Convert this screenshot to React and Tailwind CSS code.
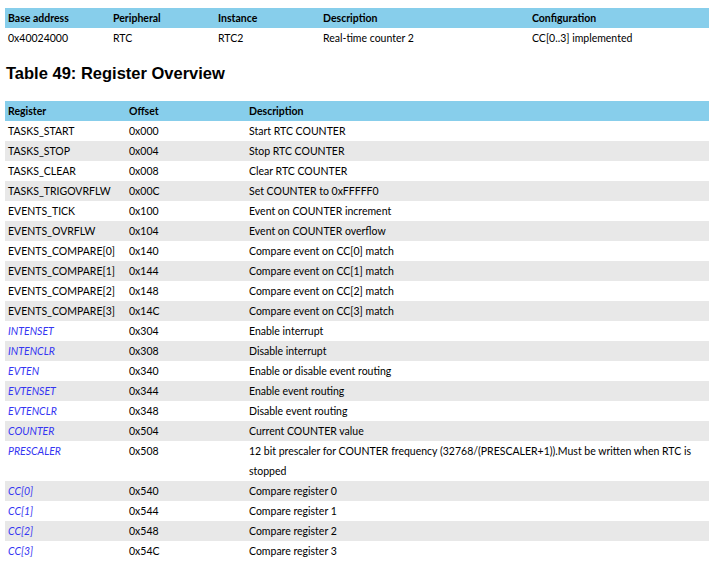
const baseRows = [
  ['0x40024000', 'RTC', 'RTC2', 'Real-time counter 2', 'CC[0..3] implemented'],
];

const registers = [
  { name: 'TASKS_START', offset: '0x000', desc: 'Start RTC COUNTER' },
  { name: 'TASKS_STOP', offset: '0x004', desc: 'Stop RTC COUNTER' },
  { name: 'TASKS_CLEAR', offset: '0x008', desc: 'Clear RTC COUNTER' },
  { name: 'TASKS_TRIGOVRFLW', offset: '0x00C', desc: 'Set COUNTER to 0xFFFFF0' },
  { name: 'EVENTS_TICK', offset: '0x100', desc: 'Event on COUNTER increment' },
  { name: 'EVENTS_OVRFLW', offset: '0x104', desc: 'Event on COUNTER overflow' },
  { name: 'EVENTS_COMPARE[0]', offset: '0x140', desc: 'Compare event on CC[0] match' },
  { name: 'EVENTS_COMPARE[1]', offset: '0x144', desc: 'Compare event on CC[1] match' },
  { name: 'EVENTS_COMPARE[2]', offset: '0x148', desc: 'Compare event on CC[2] match' },
  { name: 'EVENTS_COMPARE[3]', offset: '0x14C', desc: 'Compare event on CC[3] match' },
  { name: 'INTENSET', offset: '0x304', desc: 'Enable interrupt', link: true },
  { name: 'INTENCLR', offset: '0x308', desc: 'Disable interrupt', link: true },
  { name: 'EVTEN', offset: '0x340', desc: 'Enable or disable event routing', link: true },
  { name: 'EVTENSET', offset: '0x344', desc: 'Enable event routing', link: true },
  { name: 'EVTENCLR', offset: '0x348', desc: 'Disable event routing', link: true },
  { name: 'COUNTER', offset: '0x504', desc: 'Current COUNTER value', link: true },
  {
    name: 'PRESCALER',
    offset: '0x508',
    desc: (
      <>
        12 bit prescaler for COUNTER frequency (32768/(PRESCALER+1)).Must be written when RTC is
        <br />
        stopped
      </>
    ),
    link: true,
  },
  { name: 'CC[0]', offset: '0x540', desc: 'Compare register 0', link: true },
  { name: 'CC[1]', offset: '0x544', desc: 'Compare register 1', link: true },
  { name: 'CC[2]', offset: '0x548', desc: 'Compare register 2', link: true },
  { name: 'CC[3]', offset: '0x54C', desc: 'Compare register 3', link: true },
];

const cellFont = { fontFamily: 'Lato, "Open Sans", sans-serif' };

export default function App() {
  return (
    <div className="min-h-screen bg-white pl-[5px] pt-[8px] text-[10.5px] text-black" style={cellFont}>
      {/* tabel instance */}
      <div className="grid grid-cols-[105px_105px_105px_209px_1fr] bg-[#87ceeb] font-bold">
        {['Base address', 'Peripheral', 'Instance', 'Description', 'Configuration'].map((h) => (
          <div key={h} className="h-5 pl-[3px] leading-5">{h}</div>
        ))}
      </div>
      {baseRows.map((r) => (
        <div key={r[0]} className="grid grid-cols-[105px_105px_105px_209px_1fr]">
          {r.map((c, i) => (
            <div key={i} className="h-5 pl-[3px] leading-5">{c}</div>
          ))}
        </div>
      ))}

      <h2 className="mt-[15px] pl-[1px] text-[16.5px] leading-5 font-bold" style={{ fontFamily: '"Liberation Sans", Arial, sans-serif' }}>
        Table 49: Register Overview
      </h2>

      {/* tabel register */}
      <div className="mt-[18px]">
        <div className="grid grid-cols-[124px_120px_1fr] bg-[#87ceeb] font-bold">
          <div className="h-5 pl-[3px] leading-5">Register</div>
          <div className="h-5 leading-5">Offset</div>
          <div className="h-5 leading-5">Description</div>
        </div>
        {registers.map((r, i) => (
          <div
            key={r.name}
            className={`grid grid-cols-[124px_120px_1fr] leading-5 ${i % 2 === 1 ? 'bg-[#e8e8e8]' : 'bg-white'}`}
          >
            <div className={`pl-[3px] ${r.link ? 'italic text-[#3535f2]' : ''}`}>{r.name}</div>
            <div>{r.offset}</div>
            <div>{r.desc}</div>
          </div>
        ))}
      </div>
    </div>
  );
}
